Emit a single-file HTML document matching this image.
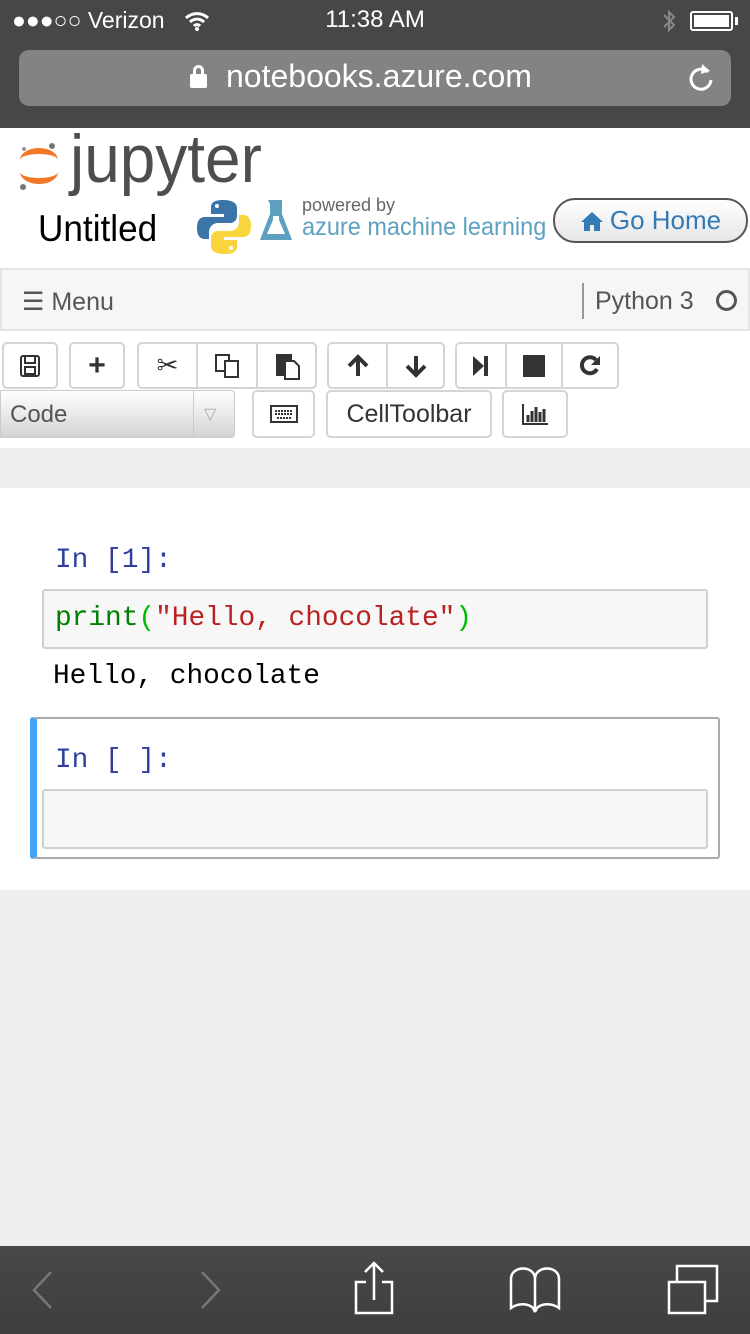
<!DOCTYPE html>
<html><head><meta charset="utf-8"><style>
*{box-sizing:border-box;margin:0;padding:0}
body{width:750px;height:1334px;background:#eeeeee;font-family:"Liberation Sans",sans-serif;position:relative;overflow:hidden}
.a{position:absolute}
.btn{position:absolute;background:#fff;border:2px solid #d4d4d4;border-radius:5px;display:flex;align-items:center;justify-content:center;color:#333}
.mono{font-family:"Liberation Mono",monospace;font-size:27.8px}
</style></head><body>
<div class="a" style="left:0;top:0;width:750px;height:128px;background:#474747"></div>
<div class="a" style="left:12px;top:7px;color:#fff;font-size:23px">●●●○○ Verizon</div>
<svg class="a" style="left:184px;top:10px" width="26" height="22" viewBox="0 0 26 22"><path d="M2 8a16 16 0 0 1 22 0M6 12a10 10 0 0 1 14 0M10 16a4 4 0 0 1 6 0" stroke="#fff" stroke-width="3" fill="none"/><circle cx="13" cy="19" r="2" fill="#fff"/></svg>
<div class="a" style="left:0;width:750px;top:6px;text-align:center;color:#fff;font-size:24px">11:38 AM</div>
<svg class="a" style="left:660px;top:8px" width="18" height="26"><path d="M4 7l10 10-5 5V4l5 5L4 19" stroke="#888" stroke-width="2" fill="none"/></svg>
<div class="a" style="left:690px;top:11px;width:43px;height:20px;border:2px solid #fff;border-radius:3px;padding:2px"><div style="background:#fff;width:100%;height:100%"></div></div>
<div class="a" style="left:735px;top:17px;width:3px;height:8px;background:#fff"></div>
<div class="a" style="left:19px;top:50px;width:712px;height:56px;background:#838383;border-radius:10px"></div>
<div class="a" style="left:190px;top:74px;width:17px;height:14px;background:#fff;border-radius:2px"></div>
<div class="a" style="left:193px;top:65px;width:11px;height:14px;border:3px solid #fff;border-radius:6px 6px 0 0"></div>
<div class="a" style="left:226px;top:58px;color:#fff;font-size:32px">notebooks.azure.com</div>
<svg class="a" style="left:686px;top:62px" width="30" height="32"><path d="M22 10a10 10 0 1 0 3 8" stroke="#fff" stroke-width="3" fill="none"/><path d="M16 2l8 7-9 3z" fill="#fff"/></svg>

<div class="a" style="left:0;top:128px;width:750px;height:320px;background:#fff"></div>
<svg class="a" style="left:16px;top:140px" width="46" height="52"><path d="M4 20a19 12 0 0 1 38 0a19 6 0 0 0-38 0z" fill="#f37726"/><path d="M4 32a19 12 0 0 0 38 0a19 6 0 0 1-38 0z" fill="#f37726"/><circle cx="36" cy="6" r="3" fill="#767677"/><circle cx="7" cy="47" r="3" fill="#767677"/><circle cx="8" cy="9" r="2" fill="#989798"/></svg>
<div class="a" style="left:70px;top:120px;font-size:68px;color:#4e4e4e;transform:scaleX(0.94);transform-origin:0 0">jupyter</div>
<div class="a" style="left:38px;top:208px;font-size:37px;color:#000;transform:scaleX(0.95);transform-origin:0 0">Untitled</div>
<svg class="a" style="left:196px;top:198px" width="56" height="58"><path d="M27 2c-12 0-12 5-12 8v6h13v3H9c-6 0-8 5-8 11s2 11 8 11h4v-7c0-5 4-9 9-9h12c4 0 7-3 7-7V10c0-5-5-8-14-8z" fill="#3a74a8"/><path d="M29 56c12 0 12-5 12-8v-6H28v-3h19c6 0 8-5 8-11s-2-11-8-11h-4v7c0 5-4 9-9 9H22c-4 0-7 3-7 7v8c0 5 5 8 14 8z" fill="#f9d43d"/><circle cx="21" cy="8" r="2" fill="#fff"/><circle cx="35" cy="50" r="2" fill="#fff"/></svg>
<svg class="a" style="left:258px;top:198px" width="36" height="46"><path d="M10 2h14v14l10 26H2l10-26V6" fill="#5ea0c0"/><path d="M15 18v4l-6 14h18l-6-14v-4z" fill="#fff"/></svg>
<div class="a" style="left:302px;top:195px;font-size:18px;color:#666">powered by</div>
<div class="a" style="left:302px;top:213px;font-size:25px;color:#5ea0c0;transform:scaleX(0.94);transform-origin:0 0">azure machine learning</div>
<div class="a" style="left:553px;top:198px;width:195px;height:45px;border:2px solid #555;border-radius:22px;background:linear-gradient(#fff,#e6e6e6);display:flex;align-items:center;justify-content:center;color:#337ab7;font-size:26px"><svg width="24" height="22" style="margin-right:6px"><path d="M12 2L1 12h3v9h6v-6h4v6h6v-9h3z" fill="#337ab7"/></svg>Go Home</div>

<div class="a" style="left:0;top:268px;width:750px;height:63px;background:#f6f6f6;border:2px solid #e4e4e4"></div>
<div class="a" style="left:22px;top:287px;font-size:25px;color:#555">☰ Menu</div>
<div class="a" style="left:582px;top:283px;width:2px;height:36px;background:#999"></div>
<div class="a" style="left:595px;top:287px;font-size:25px;color:#555">Python 3</div>
<div class="a" style="left:716px;top:290px;width:21px;height:21px;border:3px solid #555;border-radius:50%"></div>

<div class="btn" style="left:2px;top:342px;width:56px;height:47px"><svg width="22" height="24"><rect x="2" y="2" width="18" height="20" rx="2" stroke="#333" stroke-width="2" fill="none"/><rect x="6" y="2" width="10" height="7" stroke="#333" stroke-width="2" fill="none"/><rect x="6" y="13" width="10" height="7" stroke="#333" stroke-width="2" fill="none"/></svg></div>
<div class="btn" style="left:69px;top:342px;width:56px;height:47px;font-size:30px;font-weight:bold">+</div>
<div class="btn" style="left:137px;top:342px;width:61px;height:47px;border-radius:5px 0 0 5px;font-size:26px">✂</div>
<div class="btn" style="left:196px;top:342px;width:62px;height:47px;border-radius:0"><svg width="26" height="26"><rect x="2" y="2" width="13" height="16" stroke="#333" stroke-width="2" fill="#fff"/><rect x="11" y="8" width="13" height="16" stroke="#333" stroke-width="2" fill="#fff"/></svg></div>
<div class="btn" style="left:256px;top:342px;width:61px;height:47px;border-radius:0 5px 5px 0"><svg width="26" height="28"><rect x="2" y="2" width="16" height="22" fill="#333"/><path d="M11 9h9l5 5v13H11z" fill="#fff" stroke="#333" stroke-width="2"/></svg></div>
<div class="btn" style="left:327px;top:342px;width:61px;height:47px;border-radius:5px 0 0 5px"><svg width="24" height="24"><path d="M12 3v19M3 12l9-9 9 9" stroke="#333" stroke-width="4" fill="none"/></svg></div>
<div class="btn" style="left:386px;top:342px;width:59px;height:47px;border-radius:0 5px 5px 0"><svg width="24" height="24"><path d="M12 2v19M3 12l9 9 9-9" stroke="#333" stroke-width="4" fill="none"/></svg></div>
<div class="btn" style="left:455px;top:342px;width:52px;height:47px;border-radius:5px 0 0 5px"><svg width="20" height="24"><path d="M2 2l11 10L2 22z" fill="#333"/><rect x="13" y="2" width="4" height="20" fill="#333"/></svg></div>
<div class="btn" style="left:505px;top:342px;width:58px;height:47px;border-radius:0"><div style="width:22px;height:22px;background:#333"></div></div>
<div class="btn" style="left:561px;top:342px;width:58px;height:47px;border-radius:0 5px 5px 0"><svg width="24" height="24"><path d="M19 15a8 8 0 1 1-1-9" stroke="#333" stroke-width="4" fill="none"/><path d="M22 2v9h-9z" fill="#333"/></svg></div>

<div class="a" style="left:0;top:390px;width:235px;height:48px;background:linear-gradient(#fff,#d4d4d4);border:1px solid #ccc;border-radius:0 4px 4px 0"></div>
<div class="a" style="left:193px;top:391px;width:1px;height:46px;background:#ccc"></div>
<div class="a" style="left:10px;top:401px;font-size:24px;color:#555">Code</div>
<div class="a" style="left:204px;top:404px;font-size:16px;color:#aaa">▽</div>
<div class="btn" style="left:252px;top:390px;width:63px;height:48px"><svg width="28" height="18"><rect x="1" y="1" width="26" height="16" stroke="#333" stroke-width="2" fill="none"/><path d="M5 6h18M5 9h18M7 13h14" stroke="#333" stroke-width="2" stroke-dasharray="2 1"/></svg></div>
<div class="btn" style="left:326px;top:390px;width:166px;height:48px;font-size:25px">CellToolbar</div>
<div class="btn" style="left:502px;top:390px;width:66px;height:48px"><svg width="28" height="22"><path d="M2 1v20h25" stroke="#333" stroke-width="2" fill="none"/><path d="M7 12v7M11 8v11M15 4v15M19 9v10M23 6v13" stroke="#333" stroke-width="3"/></svg></div>

<div class="a" style="left:0;top:488px;width:750px;height:402px;background:#fff"></div>
<div class="a mono" style="left:55px;top:545px;color:#303f9f">In [1]:</div>
<div class="a" style="left:42px;top:589px;width:666px;height:60px;background:#f7f7f7;border:2px solid #cfcfcf;border-radius:3px"></div>
<div class="a mono" style="left:55px;top:603px"><span style="color:#008000">print</span><span style="color:#0b0">(</span><span style="color:#ba2121">"Hello, chocolate"</span><span style="color:#0b0">)</span></div>
<div class="a mono" style="left:53px;top:661px;color:#000">Hello, chocolate</div>
<div class="a" style="left:30px;top:717px;width:690px;height:142px;border:2px solid #ababab;border-left:7px solid #42a5f5;border-radius:3px"></div>
<div class="a mono" style="left:55px;top:745px;color:#303f9f">In [ ]:</div>
<div class="a" style="left:42px;top:789px;width:666px;height:60px;background:#f7f7f7;border:2px solid #cfcfcf;border-radius:3px"></div>

<div class="a" style="left:0;top:1246px;width:750px;height:88px;background:linear-gradient(#484848,#3e3e3e)"></div>
<svg class="a" style="left:0;top:1246px" width="750" height="88"><g fill="none" stroke-width="2.5"><path d="M51 26L34 44l17 18M202 26l17 18-17 18" stroke="#777"/><g stroke="#fff"><path d="M366 36h-10v31h36V36h-10M374 54V17M365 26l9-9 9 9"/><path d="M535 66l-2-4c-5-5-15-5-22 0V33c0-14 24-14 24 0zm0 0l2-4c5-5 15-5 22 0V33c0-14-24-14-24 0z"/><path d="M669 36h36v31h-36zM677 36v-16h40v35h-12"/></g></g></svg>
</body></html>
